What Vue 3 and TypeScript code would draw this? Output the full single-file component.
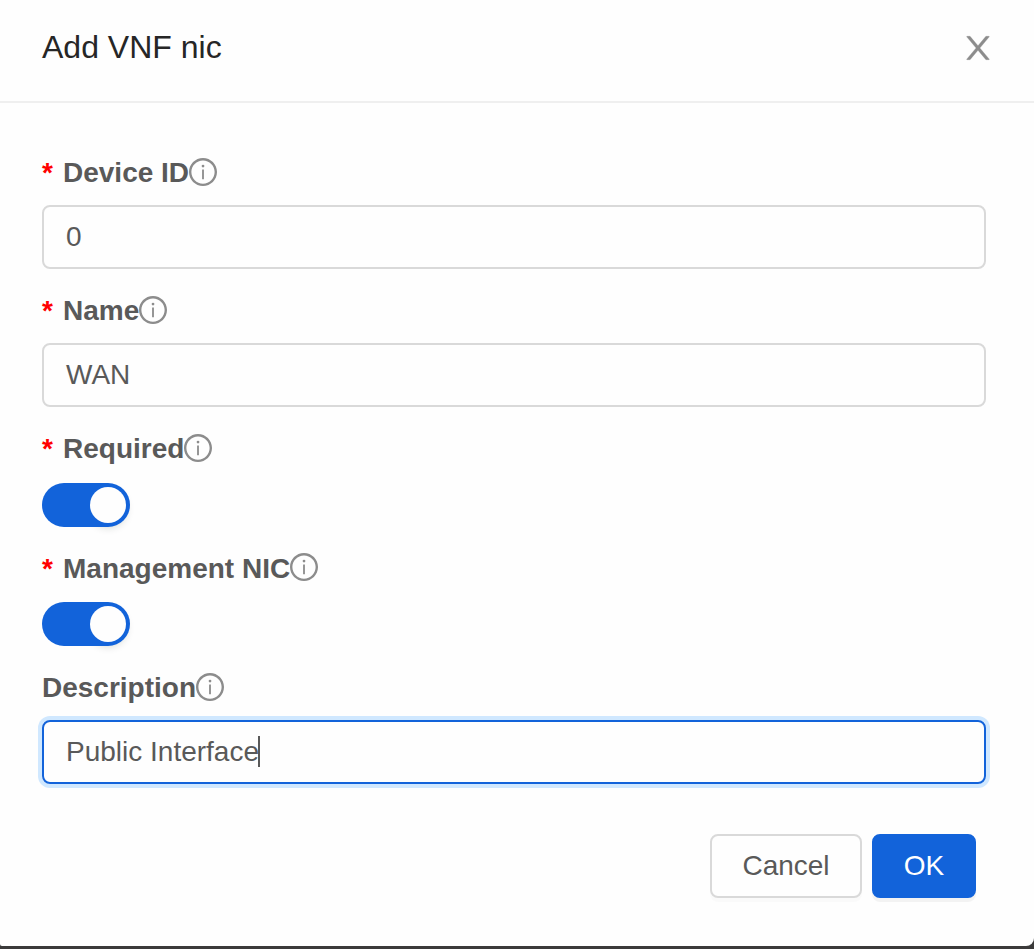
<script setup lang="ts">
interface Field {
  label: string
  required: boolean
  kind: 'input' | 'switch'
  value?: string
  focused?: boolean
}

const fields: Field[] = [
  { label: 'Device ID', required: true, kind: 'input', value: '0' },
  { label: 'Name', required: true, kind: 'input', value: 'WAN' },
  { label: 'Required', required: true, kind: 'switch' },
  { label: 'Management NIC', required: true, kind: 'switch' },
  { label: 'Description', required: false, kind: 'input', value: 'Public Interface', focused: true },
]
</script>

<template>
  <div class="backdrop">
    <section class="modal" role="dialog" aria-label="Add VNF nic">
      <header class="header">
        <h1 class="title">Add VNF nic</h1>
        <svg class="close" viewBox="64 64 896 896">
          <path d="M563.8 512l262.5-312.9c4.4-5.2.7-13.1-6.1-13.1h-79.8c-4.7 0-9.2 2.1-12.3 5.7L511.6 449.8 295.1 191.7c-3-3.6-7.5-5.7-12.3-5.7H203c-6.8 0-10.5 7.9-6.1 13.1L459.4 512 196.9 824.9A7.95 7.95 0 0 0 203 838h79.8c4.7 0 9.2-2.1 12.3-5.7l216.5-258.1 216.5 258.1c3 3.6 7.5 5.7 12.3 5.7h79.8c6.8 0 10.5-7.9 6.1-13.1L563.8 512z" />
        </svg>
      </header>
      <div class="body">
        <div v-for="f in fields" :key="f.label" class="item" :class="f.kind">
          <div class="label">
            <span v-if="f.required" class="star">*</span>
            <span class="name">{{ f.label }}</span>
            <svg class="info" viewBox="64 64 896 896">
              <path d="M512 64C264.6 64 64 264.6 64 512s200.6 448 448 448 448-200.6 448-448S759.4 64 512 64zm0 820c-205.4 0-372-166.6-372-372s166.6-372 372-372 372 166.6 372 372-166.6 372-372 372z" />
              <circle cx="512" cy="322" r="44" />
              <rect x="483" y="432" width="58" height="308" rx="6" />
            </svg>
          </div>
          <div v-if="f.kind === 'input'" class="box" :class="{ focused: f.focused }">
            <span>{{ f.value }}</span>
            <i v-if="f.focused" class="caret"></i>
          </div>
          <div v-else class="toggle"><span class="knob"></span></div>
        </div>
        <footer class="actions">
          <button class="btn">Cancel</button>
          <button class="btn primary">OK</button>
        </footer>
      </div>
    </section>
  </div>
</template>

<style>
body {
  margin: 0;
  overflow: hidden;
}
</style>

<style scoped>
.backdrop {
  height: 949px;
  background: #3b3a3a;
  font-family: "Liberation Sans", Arial, sans-serif;
  font-size: 28px;
  color: #595959;
}
.modal {
  box-sizing: border-box;
  height: 946px;
  background: #fefefe;
  border-radius: 0 0 8px 2px;
}
.header {
  box-sizing: border-box;
  display: flex;
  align-items: center;
  justify-content: space-between;
  height: 103px;
  padding: 0 40px 6px 42px;
  border-bottom: 2px solid #efefef;
}
.title {
  margin: 0 0 2px;
  font-size: 32px;
  font-weight: 400;
  line-height: 44px;
  color: #262626;
}
.close {
  width: 32px;
  height: 32px;
  fill: #8c8c8c;
  stroke: #8c8c8c;
  stroke-width: 10;
}
.body {
  padding: 49px 48px 0 42px;
}
.item.input {
  height: 138px;
}
.item.switch {
  height: 120px;
}
.item.input + .item.switch {
  height: 119px;
}
.label {
  display: flex;
  align-items: center;
  height: 40px;
  font-weight: 700;
  line-height: 40px;
}
.star,
.name {
  padding-top: 2px;
}
.switch + .switch .star,
.switch + .switch .name {
  padding-top: 4px;
}
.star {
  width: 11px;
  margin-right: 10px;
  color: #f00;
}
.info {
  flex: none;
  width: 28px;
  height: 28px;
  fill: #8c8c8c;
}
.box {
  box-sizing: border-box;
  display: flex;
  align-items: center;
  height: 64px;
  margin-top: 13px;
  padding: 0 22px;
  border: 2px solid #d9d9d9;
  border-radius: 8px;
  line-height: 40px;
}
.box.focused {
  border-color: #1263da;
  box-shadow: 0 0 0 4px #d0e8ff;
}
.caret {
  width: 2px;
  height: 31px;
  margin: 0 0 2px -1px;
  background: #595959;
}
.toggle {
  position: relative;
  z-index: 0;
  display: flex;
  align-items: center;
  justify-content: flex-end;
  box-sizing: border-box;
  width: 88px;
  height: 44px;
  margin-top: 15px;
  padding: 4px;
}
.toggle::before,
.toggle::after {
  content: "";
  position: absolute;
  z-index: -1;
}
.toggle::before {
  top: 4px;
  right: 4px;
  width: 36px;
  height: 36px;
  border-radius: 50%;
  box-shadow: 0 4px 8px rgba(0, 35, 11, 0.2);
}
.toggle::after {
  inset: 0;
  border-radius: 22px;
  background: #1263da;
}
.knob {
  width: 36px;
  height: 36px;
  border-radius: 50%;
  background: #fefefe;
}
.actions {
  display: flex;
  justify-content: flex-end;
  gap: 10px;
  padding-right: 10px;
  margin-top: 29px;
}
.btn {
  box-sizing: border-box;
  width: 152px;
  height: 64px;
  padding: 0;
  border: 2px solid #d9d9d9;
  border-radius: 8px;
  background: #fefefe;
  box-shadow: 0 4px 0 rgba(0, 0, 0, 0.016);
  font: inherit;
  color: inherit;
}
.btn.primary {
  width: 104px;
  border-color: #1263da;
  background: #1263da;
  box-shadow: 0 4px 0 rgba(0, 0, 0, 0.045);
  color: #fff;
}
</style>
